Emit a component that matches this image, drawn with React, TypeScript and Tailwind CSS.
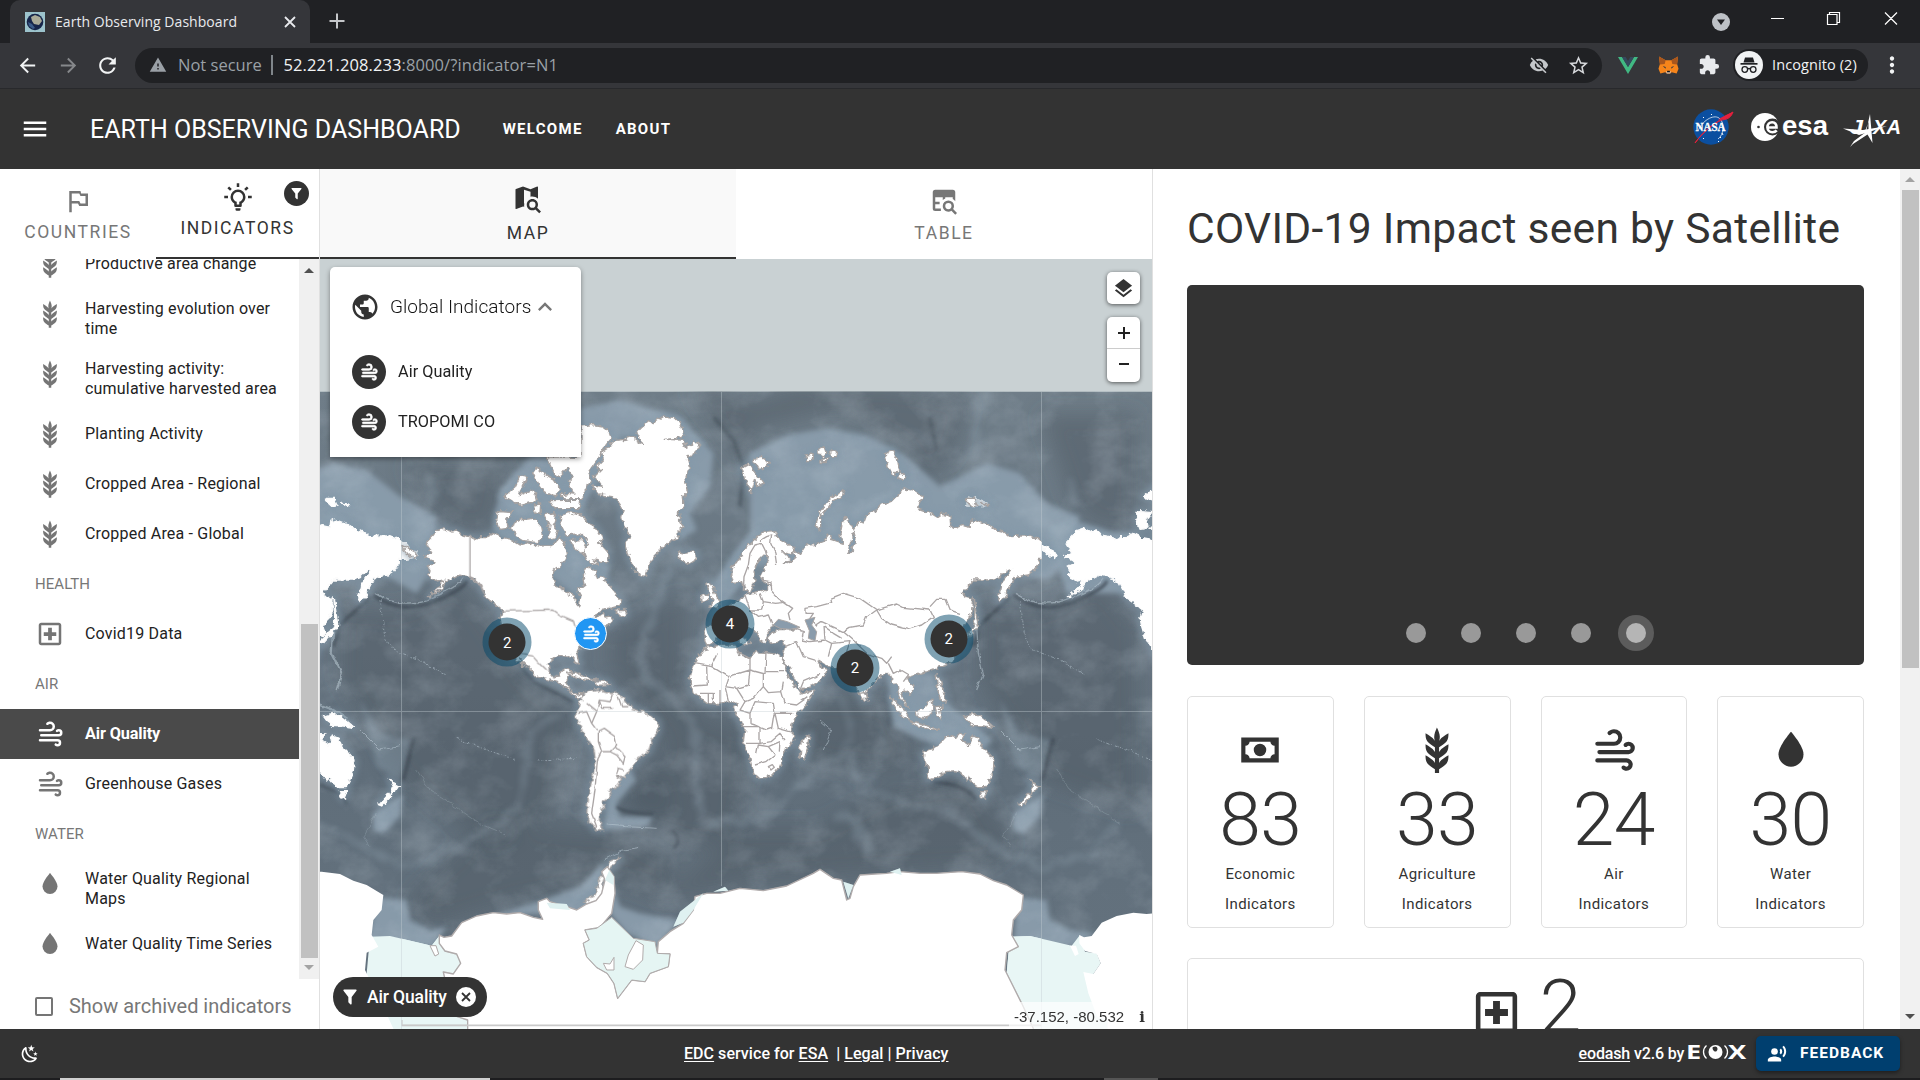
import type { ReactNode } from "react";
import {
  MdArrowBack,
  MdArrowForward,
  MdExpandLess,
  MdExtension,
  MdLayers,
  MdMoreVert,
  MdPublic,
  MdRecordVoiceOver,
  MdRefresh,
  MdStarBorder,
  MdVisibilityOff,
  MdWarning,
} from "react-icons/md";

const ICONS = {
  wind: "M4,10A1,1 0 0,1 3,9A1,1 0 0,1 4,8H12A2,2 0 0,0 14,6A2,2 0 0,0 12,4C11.45,4 10.95,4.22 10.59,4.59C10.2,5 9.56,5 9.17,4.59C8.78,4.2 8.78,3.56 9.17,3.17C9.9,2.45 10.9,2 12,2A4,4 0 0,1 16,6A4,4 0 0,1 12,10H4M19,12A1,1 0 0,0 20,11A1,1 0 0,0 19,10C18.72,10 18.47,10.11 18.29,10.29C17.9,10.68 17.27,10.68 16.88,10.29C16.5,9.9 16.5,9.27 16.88,8.88C17.42,8.34 18.17,8 19,8A3,3 0 0,1 22,11A3,3 0 0,1 19,14H5A1,1 0 0,1 4,13A1,1 0 0,1 5,12H19M18,18H4A1,1 0 0,1 3,17A1,1 0 0,1 4,16H18A3,3 0 0,1 21,19A3,3 0 0,1 18,22C17.17,22 16.42,21.66 15.88,21.12C15.5,20.73 15.5,20.1 15.88,19.71C16.27,19.32 16.9,19.32 17.29,19.71C17.47,19.89 17.72,20 18,20A1,1 0 0,0 19,19A1,1 0 0,0 18,18Z",
  barley:
    "M7.33,18.33C6.5,17.17 6.5,15.83 6.5,14.5C8.17,15.5 9.83,16.5 10.67,17.67L11,18.23V15.95C9.5,15.05 8.08,14.13 7.33,13.08C6.5,11.92 6.5,10.58 6.5,9.25C8.17,10.25 9.83,11.25 10.67,12.42L11,13V10.7C9.5,9.8 8.08,8.88 7.33,7.83C6.5,6.67 6.5,5.33 6.5,4C8.17,5 9.83,6 10.67,7.17C10.77,7.31 10.86,7.46 10.94,7.62C10.77,7 10.66,6.42 10.65,5.82C10.64,4.31 11.3,2.76 11.96,1.21C12.65,2.69 13.34,4.18 13.35,5.69C13.36,6.32 13.25,6.96 13.07,7.59C13.15,7.45 13.23,7.31 13.33,7.17C14.17,6 15.83,5 17.5,4C17.5,5.33 17.5,6.67 16.67,7.83C15.92,8.88 14.5,9.8 13,10.7V13L13.33,12.42C14.17,11.25 15.83,10.25 17.5,9.25C17.5,10.58 17.5,11.92 16.67,13.08C15.92,14.13 14.5,15.05 13,15.95V18.23L13.33,17.67C14.17,16.5 15.83,15.5 17.5,14.5C17.5,15.83 17.5,17.17 16.67,18.33C15.92,19.38 14.5,20.3 13,21.2V23H11V21.2C9.5,20.3 8.08,19.38 7.33,18.33Z",
  water:
    "M12,20A6,6 0 0,1 6,14C6,10 12,3.25 12,3.25C12,3.25 18,10 18,14A6,6 0 0,1 12,20Z",
  hospital:
    "M19 3H5c-1.1 0-2 .9-2 2v14c0 1.1.9 2 2 2h14c1.1 0 2-.9 2-2V5c0-1.1-.9-2-2-2m0 16H5V5h14v14M10.5 17h3v-3.5H17v-3h-3.5V7h-3v3.5H7v3h3.5V17Z",
  cash: "M3,6H21V18H3V6M12,9A3,3 0 0,1 15,12A3,3 0 0,1 12,15A3,3 0 0,1 9,12A3,3 0 0,1 12,9M7,8A2,2 0 0,1 5,10V14A2,2 0 0,1 7,16H17A2,2 0 0,1 19,14V10A2,2 0 0,1 17,8H7Z",
  filter:
    "M14,12V19.88C14.04,20.18 13.94,20.5 13.71,20.71C13.32,21.1 12.69,21.1 12.3,20.71L10.29,18.7C10.06,18.47 9.96,18.16 10,17.87V12H9.97L4.21,4.62C3.87,4.19 3.95,3.56 4.38,3.22C4.57,3.08 4.78,3 5,3H19C19.22,3 19.43,3.08 19.62,3.22C20.05,3.56 20.13,4.19 19.79,4.62L14.03,12H14Z",
  flag: "M14.5,6L14,4H5V21H7V14H12L13,16H20V6H14.5M18,14H14L13,12H7V6H13L14,8H18V14Z",
  bulb: "M20,11H23V13H20V11M1,11H4V13H1V11M13,1V4H11V1H13M4.92,3.5L7.05,5.64L5.63,7.05L3.5,4.93L4.92,3.5M16.95,5.63L19.07,3.5L20.5,4.93L18.37,7.05L16.95,5.63M12,6A6,6 0 0,1 18,12C18,14.22 16.79,16.16 15,17.2V19A1,1 0 0,1 14,20H10A1,1 0 0,1 9,19V17.2C7.21,16.16 6,14.22 6,12A6,6 0 0,1 12,6M14,21V22A1,1 0 0,1 13,23H11A1,1 0 0,1 10,22V21H14M11,18H13V15.87C14.73,15.43 16,13.86 16,12A4,4 0 0,0 12,8A4,4 0 0,0 8,12C8,13.86 9.27,15.43 11,15.87V18Z",
  menu: "M3,6H21V8H3V6M3,11H21V13H3V11M3,16H21V18H3V16Z",
  mapSearch:
    "M15.5,12C18,12 20,14 20,16.5C20,17.38 19.75,18.21 19.31,18.9L22.39,22L21,23.39L17.88,20.32C17.19,20.75 16.37,21 15.5,21C13,21 11,19 11,16.5C11,14 13,12 15.5,12M15.5,14A2.5,2.5 0 0,0 13,16.5A2.5,2.5 0 0,0 15.5,19A2.5,2.5 0 0,0 18,16.5A2.5,2.5 0 0,0 15.5,14M19.5,2L19.34,2.03L14,4.1L8,2L2.36,3.9C2.15,3.97 2,4.15 2,4.38V19.5A0.5,0.5 0 0,0 2.5,20L2.66,19.97L8,17.9L9,18.25C8.9,17.7 8.9,16.5 9.1,15.6L8.8,15.5V4.6L14,6.2V10.1C16.3,9.7 18.5,10.4 20,11.8V2.5A0.5,0.5 0 0,0 19.5,2Z",
  tableSearch:
    "M19,3H5A2,2 0 0,0 3,5V18A2,2 0 0,0 5,20H9.5V18H5V14.5H8.5V12.5H5V9H11V11.2C11.6,10.7 12.3,10.3 13,10V9H19V10.3C19.8,10.8 20.5,11.4 21,12.2V5A2,2 0 0,0 19,3M15.5,11.5A4.5,4.5 0 0,0 11,16C11,18.5 13,20.5 15.5,20.5C16.4,20.5 17.2,20.3 17.9,19.8L21,22.9L22.4,21.5L19.3,18.4C19.8,17.7 20,16.9 20,16A4.5,4.5 0 0,0 15.5,11.5M15.5,13.5A2.5,2.5 0 0,1 18,16A2.5,2.5 0 0,1 15.5,18.5A2.5,2.5 0 0,1 13,16A2.5,2.5 0 0,1 15.5,13.5Z",
  night:
    "M17.75,4.09L15.22,6.03L16.13,9.09L13.5,7.28L10.87,9.09L11.78,6.03L9.25,4.09L12.44,4L13.5,1L14.56,4L17.75,4.09M21.25,11L19.61,12.25L20.2,14.23L18.5,13.06L16.8,14.23L17.39,12.25L15.75,11L17.81,10.95L18.5,9L19.19,10.95L21.25,11M18.97,15.95C19.8,15.87 20.69,17.05 20.16,17.8C19.84,18.25 19.5,18.67 19.08,19.07C15.17,23 8.84,23 4.94,19.07C1.03,15.17 1.03,8.83 4.94,4.93C5.34,4.53 5.76,4.17 6.21,3.85C6.96,3.32 8.14,4.21 8.06,5.04C7.79,7.9 8.75,10.87 10.95,13.06C13.14,15.26 16.1,16.22 18.97,15.95M17.33,17.97C14.5,17.81 11.7,16.64 9.53,14.5C7.36,12.31 6.2,9.5 6.04,6.68C3.23,9.82 3.34,14.64 6.35,17.66C9.37,20.67 14.19,20.78 17.33,17.97Z",
};

type IconName = keyof typeof ICONS;

function Icon({ name, className = "" }: { name: IconName; className?: string }) {
  return (
    <svg viewBox="0 0 24 24" fill="currentColor" fillRule={name === "hospital" ? "evenodd" : undefined} className={`block shrink-0 ${className}`}>
      <path d={ICONS[name]} />
    </svg>
  );
}

/* ---------- Browser chrome ---------- */

function TabStrip() {
  return (
    <div className="flex h-[43px] bg-[#202124] pl-[10px] font-['Open_Sans',sans-serif]">
      <div className="flex h-[43px] w-[300px] items-center rounded-t-[10px] bg-[#35363a] pl-[15px] pr-[13px]">
        <svg viewBox="0 0 20 20" className="h-5 w-5 shrink-0">
          <rect width="20" height="20" fill="#9cc3cc" />
          <circle cx="10" cy="10" r="8.300" fill="#16254a" />
          <path d="M6 5l4-2 5 2 2 4-3 4-5-1-2-3z" fill="#a9aa98" />
          <path d="M3 10l4 2 3 4-2 1-4-3z" fill="#3a5a88" />
        </svg>
        <span className="ml-[10px] grow whitespace-nowrap text-[14px] tracking-[0.050px] text-[#e8eaed]">Earth Observing Dashboard</span>
        <svg viewBox="0 0 14 14" className="h-[14px] w-[14px]" stroke="#e8eaed" strokeWidth="1.800">
          <path d="M2 2l10 10M12 2L2 12" />
        </svg>
      </div>
      <svg viewBox="0 0 16 16" className="ml-[19px] mt-[13px] h-4 w-4" stroke="#c5c7ca" strokeWidth="2">
        <path d="M8 .5v15M.5 8h15" />
      </svg>
      <div className="ml-auto flex">
        <svg viewBox="0 0 18 18" className="mr-[41px] mt-[13px] h-[18px] w-[18px]">
          <circle cx="9" cy="9" r="9" fill="#bdc1c6" />
          <path d="M5 6.500h8L9 12z" fill="#202124" />
        </svg>
        <svg viewBox="0 0 149 16" className="mt-[11px] h-4 w-[149px]" fill="none" stroke="#fff" strokeWidth="1.200">
          <path d="M0 7.500h13M56.500 3.500h9.500v10h-9.500zM58.500 3.500v-2h10v10h-2.500M114 1.500l12 12M126 1.500l-12 12" />
        </svg>
      </div>
    </div>
  );
}

function Toolbar() {
  return (
    <div className="flex h-[46px] items-center border-b border-[#28292c] bg-[#35363a] pb-[1px] pl-4 font-['Open_Sans',sans-serif] text-[#f1f3f4]">
      <MdArrowBack className="h-[23px] w-[23px]" />
      <MdArrowForward className="ml-[18px] h-[23px] w-[23px] text-[#86888b]" />
      <MdRefresh className="ml-[15px] h-[25px] w-[25px]" />
      <div className="ml-[15px] flex h-[35px] w-[1467px] items-center rounded-full bg-[#202124] pl-[14px] pr-[12px] text-[17px] text-[#9aa0a6]">
        <MdWarning className="h-[18px] w-[18px]" />
        <span className="ml-[11px] w-[84px] whitespace-nowrap pt-[1px] text-[16.500px]">Not secure</span>
        <span className="ml-[9px] h-5 w-[1.500px] bg-[#80868b]" />
        <span className="ml-[11px] whitespace-nowrap pt-[1px] text-[16.500px] tracking-[0.090px]">
          <span className="text-[#f1f3f4]">52.221.208.233</span>:8000/?indicator=N1
        </span>
        <MdVisibilityOff className="ml-auto h-[20px] w-[20px] text-[#c4c7ca]" />
        <MdStarBorder className="ml-[18px] h-[23px] w-[23px] text-[#d6d8db]" />
      </div>
      <svg viewBox="0 0 20 18" className="ml-4 h-[18px] w-5">
        <path d="M0 1h4l6 10 6-10h4L10 18z" fill="#41b883" />
        <path d="M4 1h3.700L10 5l2.300-4H16L10 11z" fill="#35495e" />
      </svg>
      <svg viewBox="0 0 22 20" className="ml-5 h-5 w-[21px]">
        <path d="M1 1l7 4h6l7-4-1 8 1.500 5-2 5-5-1.500-2 1.500h-3l-2-1.500-5 1.500-2-5L2 9z" fill="#f6851b" />
        <path d="M1 1l7 4-1 4-5 .5zM21 1l-7 4 1 4 5 .5z" fill="#a8561d" />
        <path d="M5 11l3 1v2zM17 11l-3 1v2z" fill="#233447" />
        <path d="M8.500 16.500h5l-.5 2.500H9z" fill="#d7c1b3" />
        <path d="M9.700 16h2.600l.3 1.500H9.400z" fill="#161616" />
      </svg>
      <MdExtension className="ml-[19px] h-[22px] w-[22px] text-[#e8eaed]" />
      <div className="ml-[13px] flex h-[32px] w-[135px] items-center rounded-full bg-[#202124] pl-[2px]">
        <svg viewBox="0 0 28 28" className="h-7 w-7 shrink-0">
          <circle cx="14" cy="14" r="14" fill="#f1f3f4" />
          <path d="M10 6.500h8l1.500 5h-11z" fill="#202124" />
          <path d="M5.500 12h17v1.700h-17z" fill="#202124" />
          <g fill="none" stroke="#202124" strokeWidth="1.300">
            <circle cx="9.800" cy="18.500" r="2.800" />
            <circle cx="18.200" cy="18.500" r="2.800" />
            <path d="M12.500 18q1.500-1 3 0" />
          </g>
        </svg>
        <span className="ml-[9px] whitespace-nowrap text-[14.500px] tracking-[0.100px]">Incognito (2)</span>
      </div>
      <MdMoreVert className="ml-[11px] h-[26px] w-[26px]" />
    </div>
  );
}

/* ---------- Header ---------- */

function NasaLogo() {
  return (
    <svg viewBox="0 0 44 40" className="h-10 w-11 overflow-visible">
      <circle cx="20" cy="20" r="17.700" fill="#0b4fa0" />
      <path d="M7 24c4-10 15-17 21-13s5 17-1 21" fill="none" stroke="#fff" strokeWidth=".7" />
      <path d="M12 10l1 1M20 7l1 1M29 30l1 1M31 26l1 2M12 31l1 1M27 34l1 1" stroke="#fff" />
      <path d="M4 36C14 22 28 13 42 5c-2 5-4 7-11 8C21 17 12 25 4 36z" fill="none" stroke="#e4203d" strokeWidth="1" />
      <path d="M27 12.500C32 9 37 7 42 5c-2 5-4 6.500-9 7.500z" fill="#e4203d" />
      <text x="19.500" y="24" textAnchor="middle" fontFamily="Liberation Serif" fontWeight="700" fontSize="12" fill="#fff" stroke="#fff" strokeWidth=".3" textLength="30" lengthAdjust="spacingAndGlyphs">
        NASA
      </text>
    </svg>
  );
}

function EsaLogo() {
  return (
    <svg viewBox="0 0 78 30" className="h-[30px] w-[78px] overflow-visible">
      <circle cx="14" cy="15" r="14" fill="#fff" />
      <circle cx="21.500" cy="15" r="8.500" fill="#333" />
      <path d="M17 15.500h8.500c0-3.500-1.500-5.300-4.300-5.300s-4.800 2.200-4.800 5.100 2.200 5 5 5c2 0 3.300-.6 4.300-1.900" fill="none" stroke="#fff" strokeWidth="2.600" />
      <circle cx="7.500" cy="15" r="1.300" fill="#333" />
      <text x="31" y="22.500" fontFamily="Liberation Sans" fontWeight="700" fontSize="28" fill="#fff" textLength="46" lengthAdjust="spacingAndGlyphs">
        esa
      </text>
    </svg>
  );
}

function JaxaLogo() {
  return (
    <svg viewBox="0 0 60 36" className="h-9 w-[60px] overflow-visible">
      <g fill="#fff">
        <text x="7" y="20.500" fontFamily="Liberation Sans" fontWeight="700" fontStyle="italic" fontSize="21" textLength="13" lengthAdjust="spacingAndGlyphs">
          J
        </text>
        <text x="30" y="20.500" fontFamily="Liberation Sans" fontWeight="700" fontStyle="italic" fontSize="21" textLength="28" lengthAdjust="spacingAndGlyphs">
          XA
        </text>
        <path d="M27 1l2.500 29-5-8.500L10 31l-3 3 4-6 12-9zM25.500 9l-3 8 3 2z" fillRule="evenodd" />
        <path d="M0 15.500l20 1.500 24-4-18 6-10 3z" />
      </g>
    </svg>
  );
}

function Header() {
  return (
    <header className="flex h-20 items-center bg-[#333] pl-5 pr-[17px] text-white">
      <Icon name="menu" className="h-[30px] w-[30px]" />
      <h1 className="ml-10 whitespace-nowrap pt-[2px] text-[25px] font-normal tracking-[0.010px]">EARTH OBSERVING DASHBOARD</h1>
      <nav className="ml-[42px] flex gap-[33px] text-[15px] font-bold tracking-[1.280px]">
        <span>WELCOME</span>
        <span>ABOUT</span>
      </nav>
      <div className="ml-auto flex items-center">
        <span className="-mt-[4px] mr-[16px]"><NasaLogo /></span>
        <span className="-mt-[5px] mr-[14px]"><EsaLogo /></span>
        <span className="mt-[3px]"><JaxaLogo /></span>
      </div>
    </header>
  );
}

/* ---------- Scroll bars ---------- */

function ScrollArrow({ up = false, color }: { up?: boolean; color: string }) {
  return (
    <svg viewBox="0 0 10 5" className="h-[5px] w-[10px] shrink-0" fill={color}>
      <path d={up ? "M0 5h10L5 0z" : "M0 0h10L5 5z"} />
    </svg>
  );
}

/* ---------- Left panel ---------- */

type Row = { kind: "head"; label: string } | { kind: "item"; icon: IconName; label: string[]; active?: boolean };

const ROWS: Row[] = [
  { kind: "item", icon: "barley", label: ["Productive area change"] },
  { kind: "item", icon: "barley", label: ["Harvesting evolution over", "time"] },
  { kind: "item", icon: "barley", label: ["Harvesting activity:", "cumulative harvested area"] },
  { kind: "item", icon: "barley", label: ["Planting Activity"] },
  { kind: "item", icon: "barley", label: ["Cropped Area - Regional"] },
  { kind: "item", icon: "barley", label: ["Cropped Area - Global"] },
  { kind: "head", label: "HEALTH" },
  { kind: "item", icon: "hospital", label: ["Covid19 Data"] },
  { kind: "head", label: "AIR" },
  { kind: "item", icon: "wind", label: ["Air Quality"], active: true },
  { kind: "item", icon: "wind", label: ["Greenhouse Gases"] },
  { kind: "head", label: "WATER" },
  { kind: "item", icon: "water", label: ["Water Quality Regional", "Maps"] },
  { kind: "item", icon: "water", label: ["Water Quality Time Series"] },
];

function IndicatorRow({ row }: { row: Row }) {
  if (row.kind === "head") {
    return <div className="flex h-[50px] items-center pl-[35px] pt-[1px] text-[15px] tracking-[0.050px] text-[#777]">{row.label}</div>;
  }
  return (
    <div
      className={`flex pl-[35px] ${row.label.length > 1 ? "h-[60px]" : "h-[50px]"} ${
        row.active ? "bg-[#4a4a4a] font-bold text-white" : "text-[#222]"
      }`}
    >
      <Icon name={row.icon} className={`mt-[10px] h-[30px] w-[30px] ${row.active ? "text-white" : "text-[#757575]"}`} />
      <div
        className={`ml-5 flex flex-col justify-center whitespace-nowrap leading-5 ${
          row.active ? "text-[16.250px] tracking-[-0.120px]" : "text-[16px] tracking-[0.190px]"
        }`}
      >
        {row.label.map((line) => (
          <span key={line}>{line}</span>
        ))}
      </div>
    </div>
  );
}

function LeftPanel() {
  return (
    <aside className="flex h-full w-[320px] shrink-0 flex-col border-r border-[#e0e0e0] bg-white">
      <div className="flex h-[90px] shrink-0">
        <div className="flex w-[156px] flex-col items-center pt-[17px] text-[#777]">
          <Icon name="flag" className="h-[30px] w-[30px]" />
          <span className="mt-[6px] text-[17.500px] leading-5 tracking-[1.560px]">COUNTRIES</span>
        </div>
        <div className="relative flex w-[163px] flex-col items-center border-b-2 border-[#333] pt-[13px] text-[#333]">
          <Icon name="bulb" className="h-[30px] w-[30px]" />
          <span className="mt-[6px] text-[17.500px] leading-5 tracking-[1.560px]">INDICATORS</span>
          <span className="absolute right-[10px] top-[12px] flex h-[25px] w-[25px] items-center justify-center rounded-full bg-[#333] text-white">
            <Icon name="filter" className="h-[15px] w-[15px]" />
          </span>
        </div>
      </div>
      <div className="flex h-[720px] shrink-0">
        <div className="flex h-full w-[299px] flex-col justify-end overflow-hidden pb-[10px]">
          {ROWS.map((row) => (
            <div key={row.kind === "head" ? row.label : row.label[0]} className="shrink-0">
              <IndicatorRow row={row} />
            </div>
          ))}
        </div>
        <div className="flex w-[20px] flex-col items-center bg-[#f0f0f0]">
          <span className="mt-[9px]"><ScrollArrow up color="#505050" /></span>
          <div className="mt-[351px] h-[334px] w-[17px] bg-[#c1c1c1]" />
          <span className="mt-[7px]"><ScrollArrow color="#a3a3a3" /></span>
        </div>
      </div>
      <div className="flex grow items-center pl-[35px] pt-[4px]">
        <span className="h-[19px] w-[18px] rounded-[2px] border-2 border-[#757575]" />
        <span className="ml-4 whitespace-nowrap text-[20px] tracking-[-0.010px] text-[#777]">Show archived indicators</span>
      </div>
    </aside>
  );
}

/* ---------- World map ---------- */

/* Each sheet holds shapes at three units per pixel, offset from the map's own origin. */
const SHEET = {
  nw: "translate(320 380) scale(.33333)",
  ne: "translate(700 380) scale(.33333)",
  sw: "translate(320 680) scale(.33333)",
  se: "translate(700 680) scale(.33333)",
};

const LAND: { sheet: keyof typeof SHEET; shapes: string[] }[] = [
  {
    sheet: "nw",
    shapes: [
      "318,488 340,465 350,452 372,445 392,456 410,453 430,466 450,470 468,480 480,470 500,470 520,460 545,472 575,478 600,495 625,488 655,498 690,497 706,488 720,470 728,482 735,500 742,520 738,540 720,560 703,570 697,590 705,615 730,628 745,640 763,648 768,668 777,678 783,650 772,630 795,612 790,590 792,568 812,560 826,575 832,595 850,590 862,610 880,630 892,650 905,662 900,676 872,684 845,688 828,700 826,716 850,700 856,712 872,708 880,720 862,738 838,738 830,730 815,742 800,765 795,790 778,805 770,822 778,852 766,848 756,826 735,832 715,826 697,838 685,852 688,876 700,890 716,888 732,866 755,870 742,892 736,906 752,930 770,945 790,938 784,955 765,952 745,928 715,908 680,898 645,890 625,862 600,836 606,850 612,862 590,835 575,805 556,775 545,740 540,712 548,690 525,672 500,655 490,632 478,610 462,596 440,590 420,585 400,595 378,606 365,625 345,640 325,650 355,625 372,600 352,606 340,596 322,588 330,572 322,560 345,548 335,538 314,530 335,515 324,500",
      "885,690 915,688 920,706 900,712 895,700",
      "820,290 842,268 828,262 850,240 845,215 862,205 880,182 915,178 935,170 970,195 950,158 960,145 985,122 1000,128 1030,108 1060,112 1082,130 1092,165 1070,175 1033,178 1088,180 1100,205 1122,186 1140,195 1130,215 1102,232 1108,262 1095,300 1102,330 1090,352 1092,378 1075,398 1080,425 1090,440 1070,460 1075,472 1045,490 1020,510 1000,530 985,560 975,590 955,582 940,560 928,530 915,485 932,470 912,440 905,412 910,390 898,370 880,350 840,345 815,318 850,322 838,305",
      "783,138 820,134 845,138 868,158 874,176 858,195 832,238 806,275 812,300 795,330 785,355 735,357 720,345 745,340 765,342 745,305 760,292 742,262 720,290 705,285 695,262 680,230 783,232",
      "548,352 585,320 600,288 622,292 606,322 598,346 640,330 652,362 600,376 575,360",
      "536,392 580,395 560,420 565,445 540,448 530,420",
      "570,440 600,420 640,415 662,440 668,470 655,488 610,482 590,470",
      "640,280 652,262 670,280 705,300 722,330 700,350 672,335 655,310",
      "690,362 782,360 778,385 705,386",
      "720,408 745,398 785,405 800,425 825,440 848,475 838,488 862,515 865,545 848,545 820,540 838,560 800,540 790,515 806,498 800,475 775,462 738,465 725,440",
      "752,482 785,478 800,500 790,520 765,510",
      "672,405 700,398 710,412 700,440 715,455 700,480 685,470 690,440",
      "640,375 662,372 660,400 645,396",
      "1072,515 1095,520 1125,515 1132,535 1105,552 1082,542",
      "738,880 765,876 800,892 828,898 800,902 765,890",
      "825,902 860,905 872,914 830,916",
      "245,500 270,508 290,518 282,536 262,520",
      "25,356 45,350 60,362 85,372 60,378 20,375",
    ],
  },
  {
    sheet: "ne",
    shapes: [
      "95,560 112,548 130,515 150,490 190,457 225,455 230,472 262,488 280,505 276,522 248,515 265,532 275,540 250,545 262,548 285,535 280,505 300,522 318,495 345,494 370,485 385,462 395,478 430,490 420,465 428,425 440,410 450,432 462,455 450,490 445,520 460,505 468,480 460,450 475,425 490,432 500,405 526,392 540,375 575,362 600,340 612,322 625,330 645,335 668,350 650,385 690,400 710,412 725,402 750,408 752,438 765,445 785,436 810,442 812,425 830,420 862,432 885,448 912,455 930,470 965,468 985,468 1010,478 1025,480 1040,495 1050,512 1075,516 1068,532 1040,538 1012,538 1018,550 1000,575 985,585 965,588 945,592 935,612 920,640 900,668 893,650 903,625 905,610 935,568 915,575 900,590 880,600 820,600 786,640 800,650 818,655 815,695 800,725 790,740 795,765 778,770 765,762 775,800 765,835 740,855 715,862 680,875 655,882 632,888 622,898 642,920 632,945 612,930 603,940 612,962 628,985 610,970 596,948 592,918 578,905 565,880 545,882 525,905 500,930 488,955 478,940 460,900 450,880 430,865 395,862 375,852 352,838 362,862 385,868 370,895 335,918 300,930 285,900 268,865 255,850 245,828 255,800 248,784 215,790 200,775 215,758 240,748 290,750 260,735 230,730 215,740 200,765 195,790 180,780 170,760 150,740 130,745 115,760 150,790 130,795 90,770 60,750 50,780 20,800 12,770 20,740 45,735 42,712 70,690 100,668 125,658 135,645 165,640 195,632 212,615 190,602 182,590 198,558 205,530 192,525 172,545 162,575 165,600 150,640 135,632 128,602 100,608 92,582",
      "15,805 60,795 105,795 115,822 150,835 165,815 200,818 245,826 256,865 275,905 300,942 345,930 325,965 290,1005 275,1035 282,1075 270,1098 248,1115 248,1145 225,1178 200,1192 172,1195 160,1178 148,1130 130,1085 135,1045 108,1005 100,982 112,972 90,962 50,972 20,970 -20,938 -30,900 -24,870 -8,835",
      "20,612 35,610 45,640 60,665 55,680 30,682 42,660 28,640",
      "5,645 22,642 24,665 6,670",
      "345,440 358,400 380,365 405,345 432,332 432,345 400,362 382,385 362,410 362,450",
      "556,222 575,210 592,235 598,270 580,288 560,250",
      "600,275 622,288 608,300 596,296",
      "123,262 145,250 165,275 180,295 190,310 170,318 165,295 152,338 135,298",
      "160,238 185,232 208,245 200,262 175,268",
      "315,225 340,222 335,245 318,245",
      "350,210 372,200 380,222 368,232",
      "388,216 410,212 408,230 392,230",
      "362,238 385,234 378,248 364,248",
      "795,355 825,355 832,372 812,380",
      "845,370 868,372 862,380",
      "478,940 492,938 505,958 490,962",
      "822,650 830,690 836,732 812,765 790,790 780,785 805,762 824,730",
      "708,880 722,900 730,935 722,940 712,915",
    ],
  },
  {
    sheet: "sw",
    shapes: [
      "785,52 800,35 830,28 860,38 885,35 910,55 935,85 975,98 1015,125 1015,150 995,185 985,215 950,240 935,262 912,292 895,288 905,300 888,325 868,330 872,350 850,365 855,382 840,395 838,420 850,448 828,450 808,425 800,395 808,330 820,285 826,240 822,210 800,175 780,140 768,110 775,80",
      "900,532 870,545 850,575 835,600 830,640 800,660 790,665 808,672 840,668 848,640 850,600 862,575 880,556",
    ],
  },
  {
    sheet: "se",
    shapes: [
      "672,215 700,205 725,185 740,168 765,172 775,160 795,162 785,180 808,195 820,168 835,175 845,200 865,220 882,240 880,272 868,300 858,320 835,320 818,308 805,292 800,300 785,280 765,275 735,278 710,292 685,297 680,285 685,265 670,235",
      "838,335 860,335 852,356 844,350",
      "988,295 998,308 1016,318 1005,335 990,340 1000,320",
      "985,340 995,348 965,378 955,374",
      "300,185 330,165 326,200 312,238 298,232",
      "790,108 830,102 850,118 880,142 850,138 820,136 800,122",
      "648,92 672,85 695,58 700,80 690,105 672,115 652,108",
      "570,48 590,70 618,95 630,120 610,112 585,85",
      "625,124 660,132 690,140 720,148 690,148 650,140",
      "705,80 730,78 718,90 725,115 712,112",
      "712,15 722,10 735,50 738,66 722,68 716,40",
    ],
  },
];

const ANTARCTICA =
  "M443,1100V1020L412,1010 385,940 370,876 400,882 422,850 410,822 375,813 358,790 358,765 372,772 395,768 425,728 470,708 520,698 560,702 600,698 640,712 668,718 655,690 655,665 680,655 690,665 740,680 770,690 800,672 828,662 845,640 855,600 845,575 862,560 882,590 885,640 875,700 840,742 795,750 808,780 790,790 800,830 830,862 862,880 882,910 893,955 935,900 975,905 990,880 1045,860 1050,822 1012,820 1015,785 1050,755 1090,730 1120,690 1125,650 1160,640 1200,640 1260,625 1330,632 1400,618 1480,580 1500,568 1540,595 1565,600 1580,660 1590,655 1600,620 1620,585 1700,580 1740,575 1800,580 1850,580 1925,575 1980,582 2020,602 2060,615 2110,645 2105,690 2080,720 2075,765 2095,800 2060,818 2055,870 2105,970 2165,1100Z";

/* The Ross ice shelf straddles the date line, so each world copy draws it at both ends. */
const ROSS_SHELF =
  "M150,770 210,768 335,797 360,765 375,815 410,820 422,850 400,882 440,1000 500,1100H120Z";

const BORDERS: { sheet: keyof typeof SHEET; d: string }[] = [
  {
    sheet: "nw",
    d: "M450,468V592L480,615 492,640 M545,693L700,690 720,705 760,722 766,745 M600,822L640,828 660,850 680,870 M700,895L712,885",
  },
  {
    sheet: "ne",
    d: "M130,632L132,590 145,555 150,520 165,495 185,490 195,510 200,530 M180,482L200,470 215,465 212,490 225,520 230,555 M185,600L210,605 212,630 235,655 278,685 265,700 270,720 M135,645L150,690 185,690 190,665 180,640 M150,690L175,712 205,705 215,730 M190,665L225,670 250,668 M315,685L350,680 395,668 392,655 430,640 480,655 530,690 500,712 490,735 450,742 430,755 365,725 350,735 330,715 340,700 315,700Z M530,690L545,685 590,672 610,682 690,690 700,710 665,735 625,748 575,735 545,715Z M690,680L710,658 735,658 748,690 780,700 M430,755L465,785 500,820 545,835 560,850 575,830 M260,740L310,755 305,780 330,785 375,780 395,790 385,830 M375,780L372,740 400,760 425,775 M395,790L450,785 440,815 420,830 M565,850L580,880 600,870 625,885 610,905 M255,800L290,785 310,830 350,842 M300,930L310,905 345,890 360,880 M110,815L150,835 150,870 195,882 198,815 M198,875L255,875 M-20,850L35,860 55,820 M20,860L22,915 -20,918 M35,860L85,890 150,870 M85,890L75,920 110,925 145,915 150,870 M190,882L190,920 205,938 245,935 250,905 M75,920L85,960 M110,925L135,965 160,955 190,920 M0,940H40V970M25,940V970M60,930V968 M135,965L120,990 150,1000 165,965 220,970 225,1000 280,1000 M245,935L255,970 290,975 325,950 M150,1000L150,1030 165,1035 200,1050 215,1045 222,1000 M225,1000L235,1045 270,1055 M130,1040L180,1040 180,1090 135,1090 M180,1090L210,1085 240,1060 255,1080 M170,1120L175,1095 205,1100 225,1125 200,1145 165,1155 M205,1100L240,1085 238,1115 M205,1160l12,-6 6,8 -10,8z",
  },
  {
    sheet: "sw",
    d: "M800,70L830,95 838,60 870,65 880,42 M775,100L800,95 815,130 830,95 M838,60L845,85 880,85 M895,50L905,80 925,80 M815,130L830,150 M835,152L850,145 885,170 890,195 870,215 845,215 835,185Z M885,200L915,230 910,250 890,225 870,215 M845,215L832,240 825,330 815,400 830,440 M890,285L895,265 915,270",
  },
];

const DEEP = [
  "M1100,10 1300,60 1420,20 1700,20 1950,60 1900,220 1820,320 1750,200 1560,90 1300,150 1260,260Z",
  "M250,250H560L520,440 420,450 330,380Z",
  "M2160,100 2450,100 2450,440 2330,440 2250,360Z",
  "M60,680 240,690 420,600 520,740 620,900 760,990 700,1300 500,1400 250,1200 60,900Z",
  "M1980,680 2160,690 2340,600 2450,740 2450,1300 2170,1200 1980,900Z",
  "M870,760 1100,640 1090,900 1140,1000 1280,1050 1280,1180 1240,1400 1100,1400 900,1280 1040,1100 870,860Z",
  "M500,1330 900,1360 1060,1440 1050,1560 900,1500 600,1560 330,1640 260,1560Z",
  "M1280,1340 1500,1340 1700,1230 1960,1200 2080,1400 2000,1460 1300,1500 1020,1560Z",
  "M1470,960 1700,960 1780,1100 1740,1180 1500,1150 1420,1100Z",
  "M910,1150 1020,1180 1060,1300 930,1300Z",
];

const SHALLOW = [
  "M520,450 540,330 620,240 760,90 900,60 1080,110 1180,220 1170,320 1110,400 1130,450 1080,480 1000,180 900,170 780,400 870,560 830,700Z",
  "M1290,220 1400,165 1520,145 1640,165 1760,230 1860,320 2000,250 2100,280 2180,370 2280,410 2230,560 2180,600 1800,500 1300,560 1200,700 1160,640 1240,520 1290,460Z",
  "M-80,290 40,250 140,270 240,350 350,410 340,560 290,640 150,560 -80,500Z",
  "M2180,440 2250,420 2380,460 2450,460V640H2240Z",
  "M880,1100 950,1200 890,1270 900,1310 1000,1310 980,1340 850,1350Z",
  "M880,1520 900,1580 960,1600 1080,1620 1010,1700 920,1660 870,1600Z",
  "M2090,1550 2180,1560 2190,1620 2250,1650 2330,1660 2260,1700 2080,1700Z",
  "M170,1550 260,1560 270,1620 330,1650 380,1640 340,1700 140,1700Z",
  "M640,1570 780,1520 850,1450 840,1600 660,1600 480,1620Z",
  "M1700,860 1840,880 1870,960 2020,1080 1960,1130 1800,1080 1720,1040Z",
  "M2080,1300 2170,1240 2160,1310 2110,1360 2080,1350Z",
  "M160,1300 250,1240 240,1310 190,1360 160,1350Z",
];

function Polys({ sheet, shapes }: { sheet: keyof typeof SHEET; shapes: string[] }) {
  return (
    <g transform={SHEET[sheet]}>
      {shapes.map((points) => (
        <polygon key={points} points={points} />
      ))}
    </g>
  );
}

function SeaFloor() {
  return (
    <g transform={SHEET.nw}>
      <g filter="url(#soft)">
        {DEEP.map((d) => (
          <path key={d} d={d} fill="#4e5a64" opacity=".5" />
        ))}
      </g>
      <g filter="url(#edge)">
        {SHALLOW.map((d) => (
          <path key={d} d={d} fill="#8c9fae" opacity=".9" />
        ))}
        <path d="M2040,960 2100,1060 2190,1080 2160,1200 2090,1160Z" fill="#8c9fae" opacity=".4" />
        <path d="M120,960 180,1060 270,1080 240,1200 170,1160Z" fill="#8c9fae" opacity=".4" />
      </g>
      <g fill="none" stroke="#91a2af" filter="url(#ridge)" opacity=".34">
        <path strokeWidth="22" d="M1060,540 1020,640 970,800 960,880 1060,960 1130,1050 1130,1200 1150,1330 1240,1320 1330,1330" />
        <path strokeWidth="18" d="M720,1000 620,1060 610,1200 590,1290 460,1370 330,1440 240,1460 100,1380 -60,1300" />
        <path strokeWidth="12" d="M1330,1330 1420,1230 1500,1170 1570,1120 1590,1050 1570,960 1480,900" />
        <path strokeWidth="18" d="M1590,1120 1620,1220 1700,1250 1900,1300 2020,1400 2160,1460 2300,1430 2400,1330" />
        <path strokeWidth="30" d="M1560,1290 1610,1340 1650,1420" />
        <path strokeWidth="8" d="M1680,980 1670,1170 1620,1240" />
        <path strokeWidth="30" d="M1960,240 1970,120 2000,40" />
        <path strokeWidth="24" d="M330,290 340,370M2250,290 2260,370" />
      </g>
      <g fill="none" stroke="#414c56" filter="url(#trench)" opacity=".85">
        <path strokeWidth="11" d="M160,645Q240,705 340,665T440,600M40,800 60,735 150,650" />
        <path strokeWidth="9" d="M282,1075 250,1200M0,1215Q60,1230 80,1270M640,905 760,965" />
        <path strokeWidth="9" d="M1055,1350Q1090,1380 1060,1405M890,1280Q910,1300 1000,1302" />
        <path strokeWidth="10" d="M1840,1205Q1940,1215 1970,1260M2200,1075 2168,1200" />
        <path strokeWidth="11" d="M2080,645Q2160,705 2260,665T2360,600M1960,800 1980,735 2070,650M540,740Q580,840 640,900" />
        <path strokeWidth="12" opacity=".6" d="M1180,110 1240,180 1270,260 1260,380M1830,110 1850,210" />
      </g>
      <g fill="none" stroke="#b9c8d2" filter="url(#fine)" opacity=".55">
        <path strokeWidth="4" d="M165,640Q240,690 330,655T430,590" />
        <path strokeWidth="3" strokeDasharray="9 5 3 6 5 4" d="M180,660 195,780 220,810 300,840 375,885M410,1075 500,1110 590,1140M650,1140 770,1135" />
        <path strokeWidth="7" d="M40,740 35,820 65,880 50,930M-10,970 40,990 90,1025" />
        <path strokeWidth="3" strokeDasharray="9 4 4 5 3 6" d="M2100,660 2115,780 2140,810 2220,840 2295,885M2330,1075 2420,1110 2500,1140" />
        <path strokeWidth="4" d="M2085,640Q2160,690 2250,655T2350,590M1970,740 1975,820 1990,880 1970,930" />
        <path strokeWidth="3" d="M1500,1020 1535,1050 1510,1110M120,1050 180,1110 240,1100M850,1440 900,1415 960,1405M860,1335 920,1340 1010,1345M2040,1050 2100,1110 2160,1100" />
        <path strokeWidth="2.500" opacity=".5" d="M290,1170 330,1230 480,1330 560,1365M2210,1170 2250,1230 2400,1330M170,1300 130,1370 150,1400M2090,1300 2050,1370 2070,1400" />
      </g>
    </g>
  );
}

function Continents({ outlined }: { outlined: boolean }) {
  return (
    <g fill="#fff" strokeLinejoin="round">
      <g stroke="#8298a9" strokeWidth="22" fill="none" opacity=".6" filter="url(#shelf)">
        {LAND.map((l) => (
          <Polys key={l.sheet} {...l} />
        ))}
      </g>
      <g stroke={outlined ? "#a5a1a0" : "#fbfbfb"} strokeWidth="4" filter="url(#coast)">
        {LAND.map((l) => (
          <Polys key={l.sheet} {...l} />
        ))}
      </g>
      {outlined &&
        BORDERS.map((b) => (
          <path key={b.sheet} transform={SHEET[b.sheet]} d={b.d} fill="none" stroke="#aaa5a5" strokeWidth="4" filter="url(#wobble)" />
        ))}
      <g transform={SHEET.ne} fill="#8a9cac" stroke="#aaa6a5" strokeWidth={outlined ? 3 : 0}>
        <path d="M315,720 345,712 335,735 350,755 345,782 325,775 328,752Z" />
        <path d="M220,735 235,718 262,725 300,742 270,748 240,745Z" />
      </g>
      <g transform={SHEET.sw}>
        <path d={ROSS_SHELF} fill="#e8f6f5" />
        <path d={ROSS_SHELF} fill="#e8f6f5" transform="translate(1920 0)" />
        <path d={ANTARCTICA} fill="#fff" stroke="#b0abab" strokeWidth={outlined ? 4 : 0} />
        <path d="M330,797 345,828 356,822 348,797Z" fill="#fff" stroke="#b0abab" strokeWidth={outlined ? 3 : 0} />
        <path
          d="M875,712 940,775 1005,785 1012,820 1050,822 1045,860 990,880 975,905 935,900 893,955 882,910 862,880 830,862 800,830 790,790 808,780 795,750 830,745Z"
          fill="#e5f5f3"
          stroke="#b0abab"
          strokeWidth="3"
        />
        <path d="M948,782 970,795 968,840 940,868 915,860 925,825ZM850,850 870,852 882,832 882,870 860,870Z" fill="#fff" stroke="#b0abab" strokeWidth="3" />
        <path d="M1060,740 1080,695 1150,640 1120,690 1090,728ZM1180,635 1215,620 1225,632ZM855,600 868,570 882,590 880,615ZM1570,605 1600,615 1585,655ZM1710,575 1740,565 1745,585ZM680,668 740,672 750,690 690,685Z" fill="#dff1f1" />
        {outlined && <path d="M245,1020 V1036 H2165" fill="none" stroke="#c9c9c9" strokeWidth="5" />}
      </g>
    </g>
  );
}

function WorldMap() {
  return (
    <svg viewBox="320 259 832 770" className="block h-[770px] w-[832px]">
      <defs>
        <linearGradient id="sea" x1="0" y1="0" x2="0" y2="1">
          <stop offset="0" stopColor="#6f7d88" />
          <stop offset=".35" stopColor="#687682" />
          <stop offset=".6" stopColor="#606e7a" />
          <stop offset="1" stopColor="#65737f" />
        </linearGradient>
        <filter id="soft" x="-20%" y="-20%" width="140%" height="140%">
          <feGaussianBlur stdDeviation="30" />
        </filter>
        <filter id="edge" x="-20%" y="-20%" width="140%" height="140%">
          <feGaussianBlur stdDeviation="8" />
        </filter>
        <filter id="ridge" x="-20%" y="-20%" width="140%" height="140%">
          <feTurbulence type="fractalNoise" baseFrequency=".02" numOctaves="4" seed="5" result="n" />
          <feDisplacementMap in="SourceGraphic" in2="n" scale="50" xChannelSelector="R" yChannelSelector="G" />
          <feGaussianBlur stdDeviation="9" />
        </filter>
        <filter id="trench" x="-10%" y="-10%" width="120%" height="120%">
          <feGaussianBlur stdDeviation="4" />
        </filter>
        <filter id="fine" x="-10%" y="-10%" width="120%" height="120%">
          <feTurbulence type="fractalNoise" baseFrequency=".04" numOctaves="3" seed="9" result="n" />
          <feDisplacementMap in="SourceGraphic" in2="n" scale="16" xChannelSelector="R" yChannelSelector="G" />
          <feGaussianBlur stdDeviation="1.600" />
        </filter>
        <filter id="shelf" x="-10%" y="-10%" width="120%" height="120%">
          <feGaussianBlur stdDeviation="3" />
        </filter>
        <filter id="coast" x="-5%" y="-5%" width="110%" height="110%">
          <feTurbulence type="fractalNoise" baseFrequency=".2" numOctaves="2" seed="2" result="n" />
          <feDisplacementMap in="SourceGraphic" in2="n" scale="6" xChannelSelector="R" yChannelSelector="G" />
        </filter>
        <filter id="wobble" x="-5%" y="-5%" width="110%" height="110%">
          <feTurbulence type="fractalNoise" baseFrequency=".03" numOctaves="2" seed="3" result="n" />
          <feDisplacementMap in="SourceGraphic" in2="n" scale="10" xChannelSelector="R" yChannelSelector="G" />
        </filter>
        <filter id="grain" x="0" y="0" width="100%" height="100%">
          <feTurbulence type="fractalNoise" baseFrequency=".022 .028" numOctaves="6" seed="14" />
          <feColorMatrix values="0 0 0 0 .68  0 0 0 0 .76  0 0 0 0 .83  1.600 0 0 0 -.66" />
        </filter>
        <clipPath id="globe">
          <rect x="320" y="391.500" width="832" height="640" />
        </clipPath>
        <clipPath id="centre">
          <rect x="401.500" y="391.500" width="640" height="640" />
        </clipPath>
      </defs>
      <rect x="320" y="259" width="832" height="133" fill="#c9d1d3" />
      <g clipPath="url(#globe)">
        <rect x="320" y="391.500" width="832" height="640" fill="url(#sea)" />
        <SeaFloor />
        <rect x="320" y="391.500" width="832" height="640" filter="url(#grain)" opacity=".28" />
        <g transform="translate(-640 0)">
          <Continents outlined={false} />
        </g>
        <g transform="translate(640 0)">
          <Continents outlined={false} />
        </g>
        <g clipPath="url(#centre)">
          <Continents outlined />
        </g>
        <g stroke="#c3ccd2" strokeWidth="1" opacity=".4">
          <path d="M401.500 392V1029M721.500 392V886M1041.500 392V1029M320 711.500H1152" />
        </g>
      </g>
    </svg>
  );
}

function Cluster({ x, y, count }: { x: number; y: number; count: number }) {
  return (
    <span
      className="absolute flex h-[49px] w-[49px] -translate-x-1/2 -translate-y-1/2 items-center justify-center rounded-full bg-[#004667]/50"
      style={{ left: x - 320, top: y - 259 }}
    >
      <span className="flex h-[37px] w-[37px] items-center justify-center rounded-full bg-[#333] text-[15px] text-white">{count}</span>
    </span>
  );
}

function WindBadge({ label }: { label: string }) {
  return (
    <div className="flex h-[50px] items-center">
      <span className="flex h-[34px] w-[34px] items-center justify-center rounded-full bg-[#333] text-white">
        <svg viewBox="0 0 24 24" className="h-5 w-5" fill="currentColor" stroke="currentColor" strokeWidth=".8">
          <path d={ICONS.wind} />
        </svg>
      </span>
      <span className="ml-3 whitespace-nowrap text-[16.250px] tracking-[0.040px] text-[#222]">{label}</span>
    </div>
  );
}

function MapPanel() {
  return (
    <section className="flex h-full w-[832px] shrink-0 flex-col">
      <div className="flex h-[90px] shrink-0 bg-white">
        <div className="flex w-1/2 flex-col items-center border-b-2 border-[#333] bg-[#f9f9f9] pt-[15px] text-[#333]">
          <Icon name="mapSearch" className="h-[30px] w-[30px]" />
          <span className="mt-[9px] text-[17.500px] leading-5 tracking-[1.560px]">MAP</span>
        </div>
        <div className="flex w-1/2 flex-col items-center pt-[17px] text-[#777]">
          <Icon name="tableSearch" className="h-[30px] w-[30px]" />
          <span className="mt-[7px] text-[17.500px] leading-5 tracking-[1.560px]">TABLE</span>
        </div>
      </div>
      <div className="relative h-[770px] overflow-hidden">
        <WorldMap />
        <Cluster x={507.3} y={642.3} count={2} />
        <Cluster x={730} y={623.7} count={4} />
        <Cluster x={855} y={667.7} count={2} />
        <Cluster x={948.7} y={638.7} count={2} />
        <span className="absolute left-[254px] top-[358px] flex h-[33px] w-[33px] items-center justify-center rounded-full border-[1.500px] border-white bg-[#2196f3] text-white">
          <svg viewBox="0 0 24 24" className="h-5 w-5" fill="currentColor" stroke="currentColor" strokeWidth=".6">
            <path d={ICONS.wind} />
          </svg>
        </span>

        <div className="absolute left-[10px] top-[8px] h-[190px] w-[251px] rounded-t-[5px] bg-white pl-[22px] pt-[25px] shadow-[0_2px_5px_rgba(0,0,0,0.4)]">
          <div className="mb-[33px] flex h-[30px] items-center">
            <MdPublic className="-ml-[2px] h-[30px] w-[30px] text-[#333]" />
            <span className="ml-[10px] whitespace-nowrap pt-[1px] text-[19px] font-light tracking-[0.050px] text-[#111]">Global Indicators</span>
            <MdExpandLess className="h-[28px] w-[28px] text-[#777]" />
          </div>
          <div className="-mt-[8px]">
            <WindBadge label="Air Quality" />
            <WindBadge label="TROPOMI CO" />
          </div>
        </div>

        <div className="absolute right-[12px] top-[13px] flex h-8 w-[33px] items-center justify-center rounded-[5px] bg-white text-[#333] shadow-[0_1px_4px_rgba(0,0,0,0.6)]">
          <MdLayers className="h-[23px] w-[23px]" />
        </div>
        <div className="absolute right-[12px] top-[58px] flex h-[65px] w-[33px] flex-col rounded-[5px] bg-white shadow-[0_1px_4px_rgba(0,0,0,0.6)]">
          <span className="flex h-[32px] items-center justify-center border-b border-[#ccc]">
            <svg viewBox="0 0 12 12" className="h-3 w-3" stroke="#222" strokeWidth="2"><path d="M0 6h12M6 0v12" /></svg>
          </span>
          <span className="flex h-[30px] items-center justify-center">
            <svg viewBox="0 0 10 2" className="h-[2px] w-[10px]" fill="#222"><path d="M0 0h10v2H0z" /></svg>
          </span>
        </div>

        <div className="absolute left-[13px] top-[718px] flex h-10 w-[154px] items-center rounded-full bg-[#333] pl-[7px] text-white">
          <Icon name="filter" className="h-[20px] w-[20px]" />
          <span className="ml-[7px] w-[82px] whitespace-nowrap text-[17.500px] font-medium tracking-[-0.130px]">Air Quality</span>
          <svg viewBox="0 0 20 20" className="ml-[7px] h-5 w-5">
            <circle cx="10" cy="10" r="10" fill="#fff" />
            <path d="M6 6l8 8M14 6l-8 8" stroke="#333" strokeWidth="1.800" />
          </svg>
        </div>

        <div className="absolute bottom-0 right-0 flex h-[27px] w-[143px] items-center bg-white/70 pl-[5px] pt-[3px] font-['Liberation_Sans',sans-serif] text-[15px] text-[#333]">
          <span className="whitespace-nowrap">-37.152, -80.532</span>
          <span className="ml-auto pr-[7px] font-['DejaVu_Serif',serif] text-[15px] font-bold">i</span>
        </div>
      </div>
    </section>
  );
}

/* ---------- Right panel ---------- */

const STATS: { icon: IconName; value: number; label: string }[] = [
  { icon: "cash", value: 83, label: "Economic" },
  { icon: "barley", value: 33, label: "Agriculture" },
  { icon: "wind", value: 24, label: "Air" },
  { icon: "water", value: 30, label: "Water" },
];

function Dot({ active = false }: { active?: boolean }) {
  return (
    <span className={`flex h-9 w-9 items-center justify-center rounded-full ${active ? "bg-[#5c5c5c]" : ""}`}>
      <span className={`h-5 w-5 rounded-full ${active ? "bg-[#b5b5b5]" : "bg-[#999]"}`} />
    </span>
  );
}

function StatsPanel() {
  return (
    <section className="flex h-full grow overflow-hidden border-l border-[#e0e0e0] bg-white text-[#333]">
      <div className="flex h-full w-[747px] flex-col overflow-hidden pl-[34px] pr-[36px]">
        <h2 className="mt-[31px] shrink-0 whitespace-nowrap text-[42.500px] font-normal leading-[58px] tracking-[0.310px]">COVID-19 Impact seen by Satellite</h2>
        <div className="mt-[27px] flex h-[380px] w-[677px] shrink-0 items-end justify-center gap-[19px] rounded-[5px] bg-[#333] pb-[14px]">
          <Dot />
          <Dot />
          <Dot />
          <Dot />
          <Dot active />
        </div>
        <div className="mt-[31px] grid w-[677px] shrink-0 grid-cols-4 gap-[30px]">
          {STATS.map((s) => (
            <div key={s.label} className="flex h-[232px] flex-col items-center rounded-[5px] border border-[#e0e0e0] pt-[28px]">
              <Icon name={s.icon} className="h-[50px] w-[50px]" />
              <span className="mt-[7px] text-[75px] font-light leading-[75px] tracking-[-0.600px]">{s.value}</span>
              <span className="mt-[2px] text-center text-[15px] leading-[30px] tracking-[0.420px]">
                {s.label}
                <br />
                Indicators
              </span>
            </div>
          ))}
        </div>
        <div className="mt-[30px] flex h-[232px] w-[677px] shrink-0 justify-center gap-[16px] rounded-[5px] border border-[#e0e0e0] pr-[1px]">
          <Icon name="hospital" className="mt-[26px] h-[55px] w-[55px]" />
          <span className="mt-[10px] text-[75px] font-light leading-[75px]">2</span>
        </div>
      </div>
      <div className="flex w-[20px] flex-col items-center bg-[#f1f1f1]">
        <span className="mt-[8px]"><ScrollArrow up color="#a3a3a3" /></span>
        <div className="mt-[8px] h-[478px] w-[17px] bg-[#c1c1c1]" />
        <span className="mt-[346px]"><ScrollArrow color="#505050" /></span>
      </div>
    </section>
  );
}

/* ---------- Footer ---------- */

function EoxLogo() {
  return (
    <svg viewBox="0 0 58 18" className="-mt-[3px] h-[18px] w-[58px] overflow-visible" fill="#fff">
      <text x="-2" y="15.500" fontFamily="Open Sans" fontWeight="700" fontSize="19" textLength="15" lengthAdjust="spacingAndGlyphs">
        E
      </text>
      <text x="40" y="15.500" fontFamily="Open Sans" fontWeight="700" fontSize="19" textLength="18" lengthAdjust="spacingAndGlyphs">
        X
      </text>
      <circle cx="27.500" cy="9" r="7" />
      <path d="M25 4c3-1.500 4.500 0 4.500 2s-2 3.500-3.500 2-2-3-1-4z" fill="#333" />
      <path d="M18.500 2.500c-4 3.500-4 9.500 0 13M36.500 2.500c4 3.500 4 9.500 0 13" fill="none" stroke="#fff" strokeWidth="1.300" />
    </svg>
  );
}

function Link({ children }: { children: ReactNode }) {
  return <span className="underline underline-offset-2">{children}</span>;
}

function Footer() {
  return (
    <footer className="flex h-[49px] shrink-0 items-center bg-[#333] pl-[20px] pr-5 text-[16px] text-white">
      <Icon name="night" className="h-[20px] w-[20px]" />
      <div className="ml-[644px] flex whitespace-pre pt-[1px] font-medium tracking-[0.050px]">
        <Link>EDC</Link>
        <span> service for </span>
        <Link>ESA</Link>
        <span>{"  | "}</span>
        <Link>Legal</Link>
        <span> | </span>
        <Link>Privacy</Link>
      </div>
      <div className="ml-auto flex items-center whitespace-pre font-medium tracking-[-0.150px]">
        <Link>eodash</Link>
        <span> v2.6 by </span>
        <EoxLogo />
        <div className="ml-[10px] flex h-[35px] w-[144px] items-center rounded-[5px] bg-[#003f6f] pl-[11px] shadow-[0_2px_4px_rgba(0,0,0,0.4)]">
          <MdRecordVoiceOver className="h-[20px] w-[20px]" />
          <span className="ml-[13px] text-[15.500px] font-bold tracking-[1px]">FEEDBACK</span>
        </div>
      </div>
    </footer>
  );
}

export default function App() {
  return (
    <div className="flex h-[1080px] w-[1920px] flex-col overflow-hidden bg-white font-['Roboto',sans-serif]">
      <TabStrip />
      <Toolbar />
      <Header />
      <main className="flex h-[860px] shrink-0">
        <LeftPanel />
        <MapPanel />
        <StatsPanel />
      </main>
      <Footer />
      <div className="flex h-[2px] bg-[#1d1d1f]">
        <div className="ml-[60px] h-full w-[430px] bg-[#d0d0d0]" />
        <div className="ml-[614px] h-full w-[54px] bg-[#555]" />
      </div>
    </div>
  );
}
